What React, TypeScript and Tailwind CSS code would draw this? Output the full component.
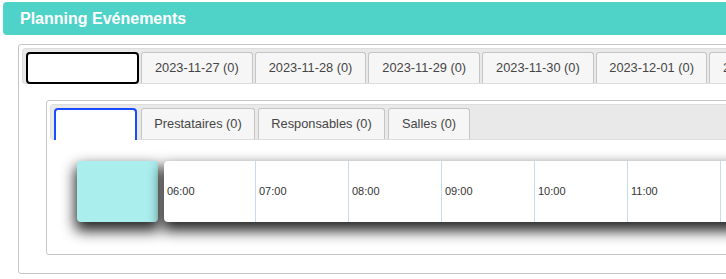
import React from "react";

const outerTabs = ["2023-11-27 (0)", "2023-11-28 (0)", "2023-11-29 (0)", "2023-11-30 (0)", "2023-12-01 (0)", "2023-12-02 (0)"];
const hours = ["06:00", "07:00", "08:00", "09:00", "10:00", "11:00", ""];

export default function App() {
  return (
    <div className="w-[726px] h-[279px] overflow-hidden bg-white pt-[2px] pl-[3px]" style={{ fontFamily: '"Liberation Sans", Arial, sans-serif' }}>
      <div className="h-[33px] w-[740px] rounded-[4px] bg-[#4fd2c8] flex items-center pl-[17px]">
        <span className="text-white font-bold text-[16px] leading-none">Planning Evénements</span>
      </div>
      <div className="mt-[9px] ml-[15px] w-[760px] h-[230px] border border-[#c5c5c5] rounded-[3px] p-[3px]">
        <div className="h-[36px] border border-[#dddddd] bg-[#e9e9e9] rounded-[3px] pt-[3px] pl-[3px] flex items-start gap-[2px] whitespace-nowrap">
          <div className="w-[113px] h-[32px] shrink-0 border-2 border-black rounded-[4px] bg-white"></div>
          {outerTabs.map((t) => (
            <div key={t} className="w-[111.7px] h-[31px] shrink-0 border border-b-0 border-[#c5c5c5] rounded-t-[3px] bg-[#f6f6f6] text-[#454545] text-[12.8px] flex items-center justify-center">
              {t}
            </div>
          ))}
        </div>
        <div className="pt-[16px] pl-[24px]">
          <div className="w-[720px] h-[155px] border border-[#c5c5c5] rounded-[3px] p-[3px]">
            <div className="h-[36px] border border-[#dddddd] bg-[#e9e9e9] rounded-[3px] pt-[3px] pl-[3px] flex items-start whitespace-nowrap">
              <div className="w-[83px] h-[32px] shrink-0 border-2 border-b-0 border-[#1a4cff] rounded-t-[4px] bg-white"></div>
              <div className="ml-[4px] w-[114px] h-[31px] shrink-0 border border-b-0 border-[#c5c5c5] rounded-t-[3px] bg-[#f6f6f6] text-[#454545] text-[12.8px] flex items-center justify-center">Prestataires (0)</div>
              <div className="ml-[3px] w-[127px] h-[31px] shrink-0 border border-b-0 border-[#c5c5c5] rounded-t-[3px] bg-[#f6f6f6] text-[#454545] text-[12.8px] flex items-center justify-center">Responsables (0)</div>
              <div className="ml-[3px] w-[82px] h-[31px] shrink-0 border border-b-0 border-[#c5c5c5] rounded-t-[3px] bg-[#f6f6f6] text-[#454545] text-[12.8px] flex items-center justify-center">Salles (0)</div>
            </div>
            <div className="pt-[21px] pl-[27px] flex gap-[6px]">
              <div className="w-[81px] h-[61px] shrink-0 rounded-[4px] bg-[#abeeee] shadow-[0_7px_14px_2px_rgba(0,0,0,0.85)]"></div>
              <div className="h-[61px] flex bg-white rounded-l-[4px] shadow-[0_7px_14px_2px_rgba(0,0,0,0.85)]">
                {hours.map((h, i) => (
                  <div key={i} className={`${i === 0 ? "w-[92px]" : "w-[93px]"} h-full shrink-0 border-r border-[#c4dcf2] flex items-center pl-[3px] text-[11px] text-[#333333]`}>
                    {h}
                  </div>
                ))}
              </div>
            </div>
          </div>
        </div>
      </div>
    </div>
  );
}
